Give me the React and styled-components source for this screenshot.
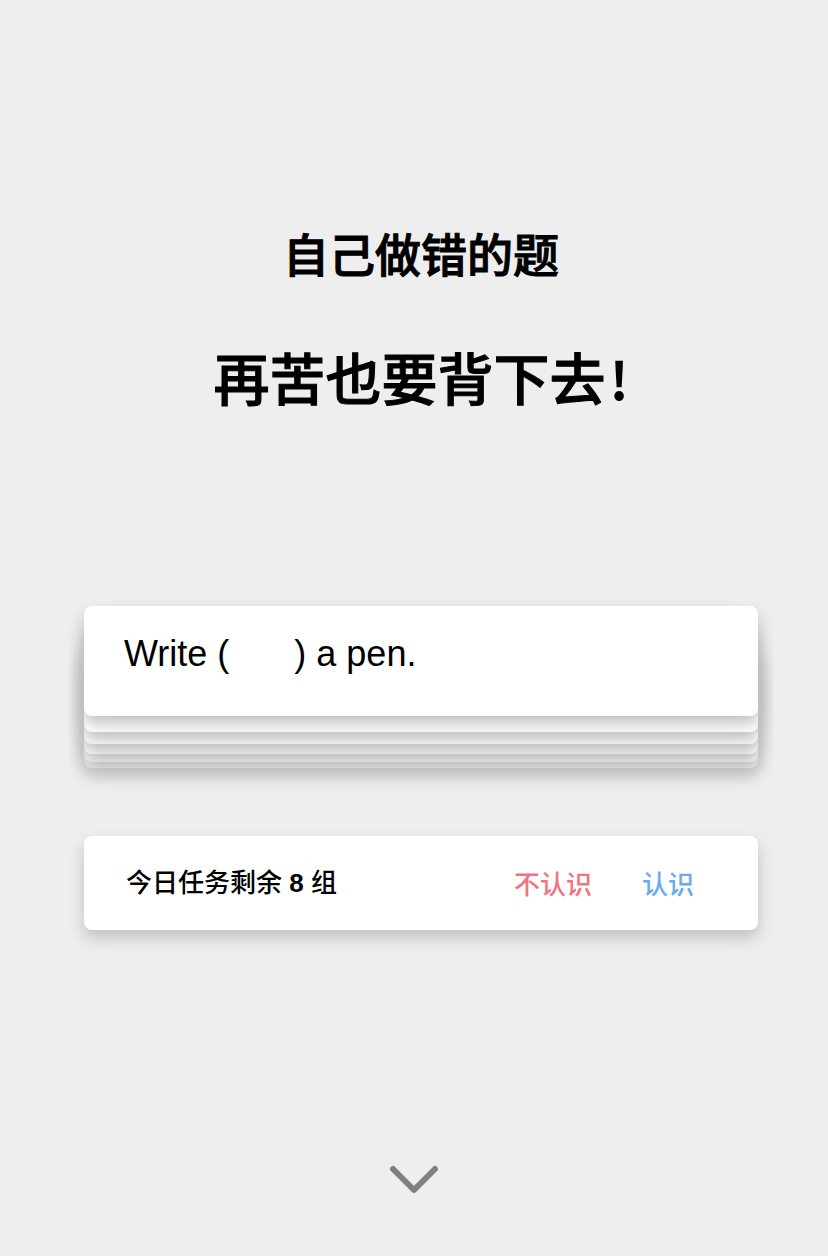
import React from "react";
import styled, { createGlobalStyle } from "styled-components";

const GlobalStyle = createGlobalStyle`
  *, *::before, *::after { box-sizing: border-box; }
  body {
    margin: 0;
    background: #eeeeee;
    color: #000;
    font-family: "Liberation Sans", "Noto Sans CJK SC", sans-serif;
  }
`;

const Page = styled.main`
  min-height: 100vh;
  display: flex;
  flex-direction: column;
  padding: 222px 70px 60px 84px;
`;

const Header = styled.header`
  display: flex;
  flex-direction: column;
  gap: 44px;
  text-align: center;
  -webkit-text-stroke: 1px currentColor;
`;

const Subtitle = styled.p`
  margin: 0;
  font-size: 46px;
  line-height: 68px;
  font-weight: 500;
`;

const Title = styled.h1`
  margin: 0;
  font-family: "Noto Sans CJK SC", sans-serif;
  font-size: 56px;
  line-height: 84px;
  font-weight: 500;
`;

const Bang = styled.span`
  padding-left: 4px;
  font-size: 52px;
  line-height: 1;
  font-weight: 700;
  -webkit-text-stroke: 0;
`;

const Stack = styled.section`
  display: grid;
  margin-top: 188px;
`;

const Card = styled.div`
  background: #fff;
  border-radius: 8px;
  box-shadow: 0 8px 16px #c0c0c0;
`;

const StackCard = styled(Card)`
  grid-area: 1 / 1;
  height: 110px;
  margin-top: ${({ $offset }) => $offset}px;
  padding: 28px 40px;
`;

const Question = styled.p`
  margin: 0;
  font-size: 36px;
  line-height: 40px;
`;

const Blank = styled.span`
  display: inline-block;
  width: 65px;
`;

const TaskBar = styled(Card)`
  display: flex;
  align-items: center;
  justify-content: space-between;
  min-height: 94px;
  margin-top: 68px;
  padding: 0 64px 0 42px;
`;

const Remaining = styled.p`
  margin: 0;
  font-size: 26px;
  line-height: 40px;
  font-weight: 500;
`;

const Count = styled.span`
  font-weight: 700;
`;

const Actions = styled.div`
  display: flex;
  gap: 50px;
  padding-top: 4px;
`;

const TextButton = styled.button`
  padding: 0;
  border: 0;
  background: none;
  color: ${({ $color }) => $color};
  font: inherit;
  font-weight: 500;
  font-size: 26px;
  line-height: 40px;
  cursor: pointer;
`;

const MoreButton = styled.button`
  align-self: center;
  margin: auto 14px 0 0;
  padding: 0;
  border: 0;
  background: none;
  line-height: 0;
  cursor: pointer;
`;

const offsets = [52, 46, 38, 28, 16];

export default function App() {
  return (
    <>
      <GlobalStyle />
      <Page>
        <Header>
          <Subtitle>自己做错的题</Subtitle>
          <Title>
            再苦也要背下去<Bang>!</Bang>
          </Title>
        </Header>
        <Stack>
          {offsets.map((offset) => (
            <StackCard key={offset} $offset={offset} aria-hidden="true" />
          ))}
          <StackCard $offset={0}>
            <Question>
              Write (<Blank />) a pen.
            </Question>
          </StackCard>
        </Stack>
        <TaskBar>
          <Remaining>
            今日任务剩余 <Count>8</Count> 组
          </Remaining>
          <Actions>
            <TextButton type="button" $color="#f4717f">不认识</TextButton>
            <TextButton type="button" $color="#68abf0">认识</TextButton>
          </Actions>
        </TaskBar>
        <MoreButton type="button" aria-label="更多">
          <svg width="50" height="32" viewBox="0 0 50 32" fill="none">
            <path
              d="M4 5L25 26L46 5"
              stroke="#808080"
              strokeWidth="6"
              strokeLinecap="round"
              strokeLinejoin="round"
            />
          </svg>
        </MoreButton>
      </Page>
    </>
  );
}
